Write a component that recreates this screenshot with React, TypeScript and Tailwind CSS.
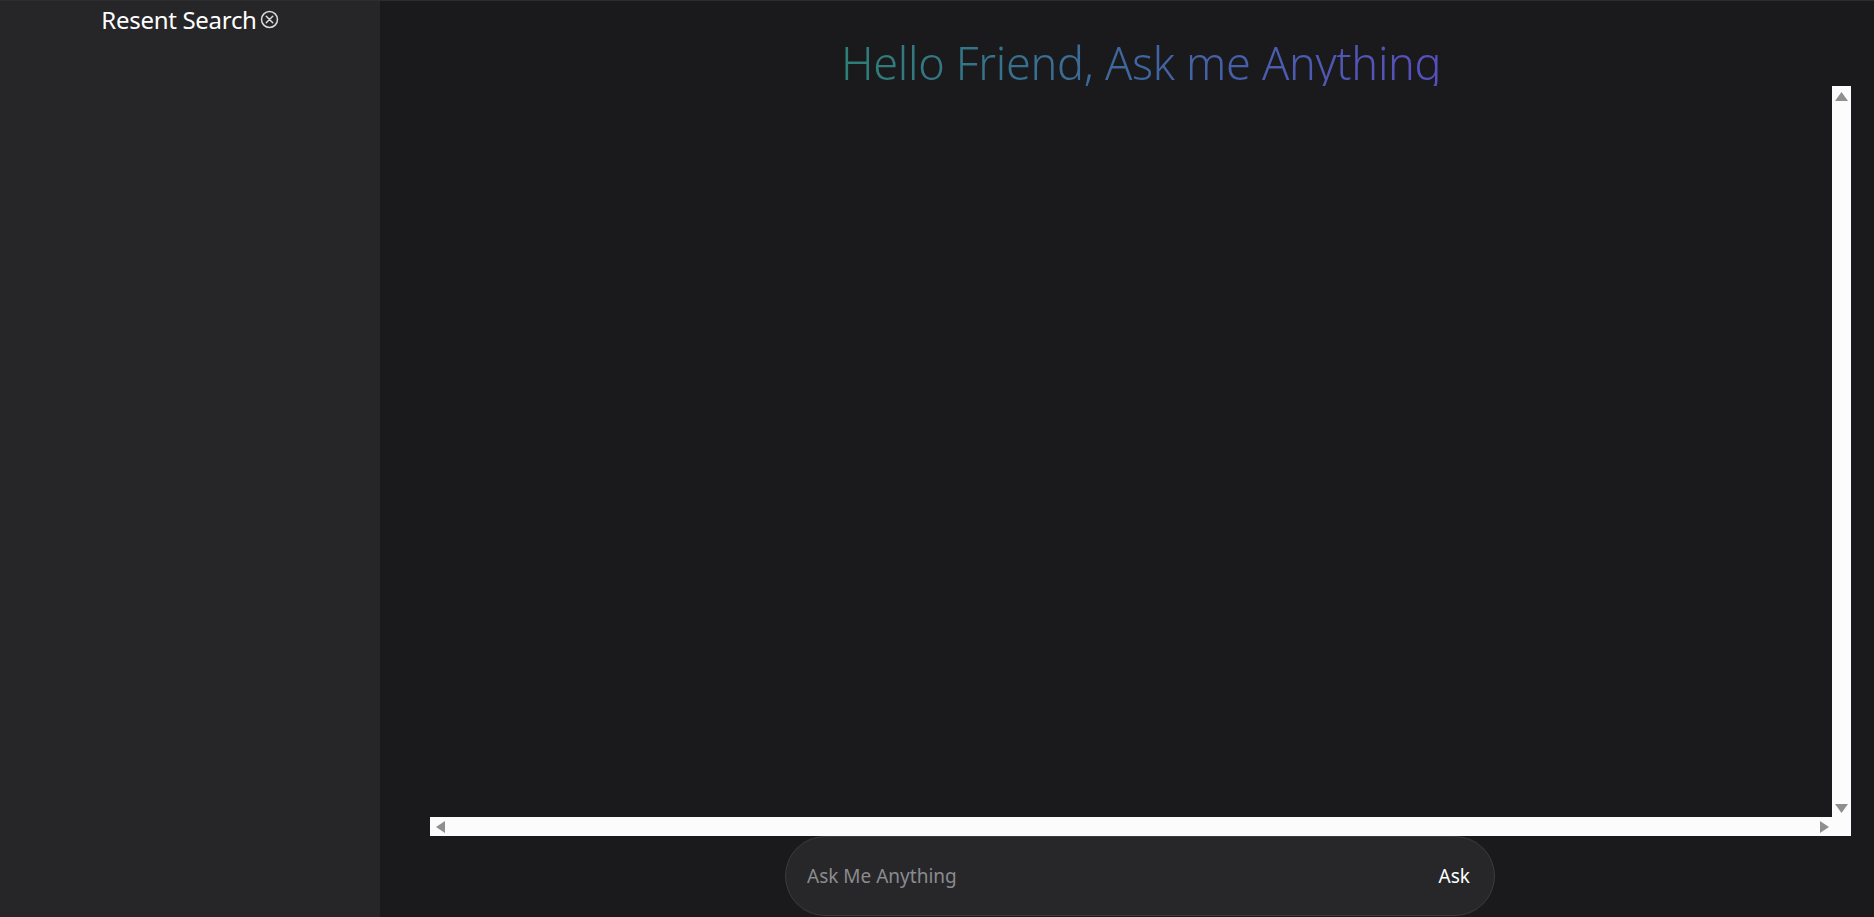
import { useState } from "react";

const ClearIcon = () => (
	<svg viewBox="0 0 20 20" className="h-[19px] w-[19px]" fill="none" stroke="#d9d9d9" strokeWidth="1.6">
		<circle cx="10" cy="10" r="8.4" />
		<path d="M6.6 6.6 L13.4 13.4 M13.4 6.6 L6.6 13.4" strokeLinecap="round" />
	</svg>
);

const Arrow = ({ dir }: { dir: "up" | "down" | "left" | "right" }) => {
	if (dir === "up" || dir === "down") {
		return (
			<svg viewBox="0 0 13 9" className="h-[9px] w-[13px]">
				<polygon points={dir === "up" ? "0,9 6.5,0 13,9" : "0,0 6.5,9 13,0"} fill="#8f8f8f" />
			</svg>
		);
	}
	return (
		<svg viewBox="0 0 9 12" className="h-[12px] w-[9px]">
			<polygon points={dir === "left" ? "9,0 0,6 9,12" : "0,0 9,6 0,12"} fill="#8f8f8f" />
		</svg>
	);
};

export default function App() {
	const [query, setQuery] = useState("");

	return (
		<div
			className="flex h-[917px] w-full overflow-hidden border-t border-[#2d2d30] bg-[#1a1a1c]"
			style={{ fontFamily: '"Noto Sans", "Open Sans", sans-serif' }}
		>
			<aside className="w-[380px] shrink-0 bg-[#262628]">
				<div className="flex items-center justify-center gap-[3px] pt-[3px] leading-[31px]">
					<span className="text-[24px] tracking-[-0.3px] text-white">Resent Search</span>
					<button className="flex items-center">
						<ClearIcon />
					</button>
				</div>
			</aside>

			<main className="flex min-w-0 flex-1 flex-col">
				<div className="h-[85px] shrink-0 overflow-hidden pl-[461px]">
					<h1 className="inline-block whitespace-nowrap bg-gradient-to-r from-[#2e7e76] via-[#3f66a0] to-[#574fc0] bg-clip-text pt-[32px] text-[45px] font-light leading-[60px] tracking-[-0.3px] text-transparent">
						Hello Friend, Ask me Anything
					</h1>
				</div>

				<div className="ml-[50px] flex h-[750px] w-[1421px] shrink-0 flex-col">
					<div className="flex min-h-0 flex-1">
						<div className="flex-1 bg-[#1a1a1c]" />
						<div className="flex w-[19px] flex-col items-center justify-between bg-[#fcfcfc] pt-[6px] pb-[4px]">
							<Arrow dir="up" />
							<Arrow dir="down" />
						</div>
					</div>
					<div className="flex h-[19px] items-center bg-[#fcfcfc]">
						<div className="flex flex-1 items-center justify-between pl-[6px] pr-[3px]">
							<Arrow dir="left" />
							<Arrow dir="right" />
						</div>
						<div className="w-[19px]" />
					</div>
				</div>

				<div className="flex flex-1 items-start pl-[405px]">
					<div className="flex h-[80px] w-[710px] items-center rounded-full border border-[#3c3c3f] bg-[#27272a] pl-[21px] pr-[24px]">
						<input
							value={query}
							onChange={(e) => setQuery(e.target.value)}
							placeholder="Ask Me Anything"
							className="flex-1 bg-transparent text-[19px] text-white outline-none placeholder:text-[#8b8b8e]"
						/>
						<button className="text-[19px] text-white">Ask</button>
					</div>
				</div>
			</main>
		</div>
	);
}
